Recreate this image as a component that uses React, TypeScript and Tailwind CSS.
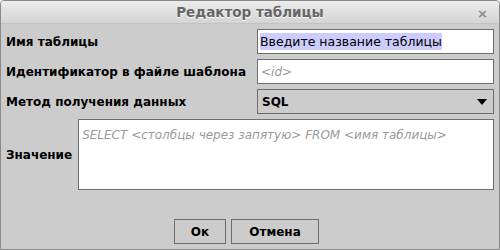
import React from "react";

const font = { fontFamily: '"DejaVu Sans", sans-serif' };

function Row({ label, children }: { label: string; children: React.ReactNode }) {
  return (
    <div className="flex items-center justify-between">
      <span className="text-[12px] font-bold text-black whitespace-nowrap">{label}</span>
      {children}
    </div>
  );
}

export default function App() {
  return (
    <div
      className="w-[500px] h-[250px] bg-[#cccccc] border border-[#8a8a8a] rounded-t-[4px] flex flex-col overflow-hidden"
      style={font}
    >
      {/* Title bar */}
      <div className="h-[23px] shrink-0 bg-gradient-to-b from-[#ececec] to-[#d4d4d4] border-b border-[#c4c4c4] relative flex items-center justify-center">
        <span className="text-[13.5px] font-bold text-[#666666] [text-shadow:0_1px_0_#ffffff]">
          Редактор таблицы
        </span>
        <span className="absolute right-[11px] top-[3px] text-[13px] font-bold text-[#8a8a8a]">×</span>
      </div>

      {/* Form */}
      <div className="flex flex-col gap-[5px] pl-[5px] pr-[5px] pt-[5px]">
        <Row label="Имя таблицы">
          <div className="w-[237px] h-[25px] bg-white border border-[#6e6e6e] flex items-center px-[2px]">
            <span className="text-[12.5px] text-black bg-[#ccccff] leading-[17px]">Введите название таблицы</span>
          </div>
        </Row>
        <Row label="Идентификатор в файле шаблона">
          <div className="w-[237px] h-[25px] bg-white border border-[#6e6e6e] flex items-center px-[3px]">
            <span className="text-[12px] italic text-[#9a9a9a]">&lt;id&gt;</span>
          </div>
        </Row>
        <Row label="Метод получения данных">
          <div className="w-[237px] h-[25px] bg-[#cccccc] border border-[#6e6e6e] flex items-center justify-between pl-[4px] pr-[6px]">
            <span className="text-[12px] font-bold text-black">SQL</span>
            <svg width="10" height="6" viewBox="0 0 10 6">
              <polygon points="0,0 10,0 5,6" fill="#000" />
            </svg>
          </div>
        </Row>
        <div className="flex items-center gap-[6px]">
          <span className="text-[12px] font-bold text-black">Значение</span>
          <div className="flex-1 h-[71px] bg-white border border-[#6e6e6e] px-[3px] py-[2px]">
            <span className="text-[12px] italic text-[#9a9a9a]">
              SELECT &lt;столбцы через запятую&gt; FROM &lt;имя таблицы&gt;
            </span>
          </div>
        </div>
      </div>

      {/* Buttons */}
      <div className="flex justify-center gap-[5px] mt-auto mb-[5px] pr-[7px]">
        <button className="w-[52px] h-[25px] border border-[#6e6e6e] bg-[#cccccc] text-[12px] font-bold text-black">
          Ок
        </button>
        <button className="w-[88px] h-[25px] border border-[#6e6e6e] bg-[#cccccc] text-[12px] font-bold text-black">
          Отмена
        </button>
      </div>
    </div>
  );
}
